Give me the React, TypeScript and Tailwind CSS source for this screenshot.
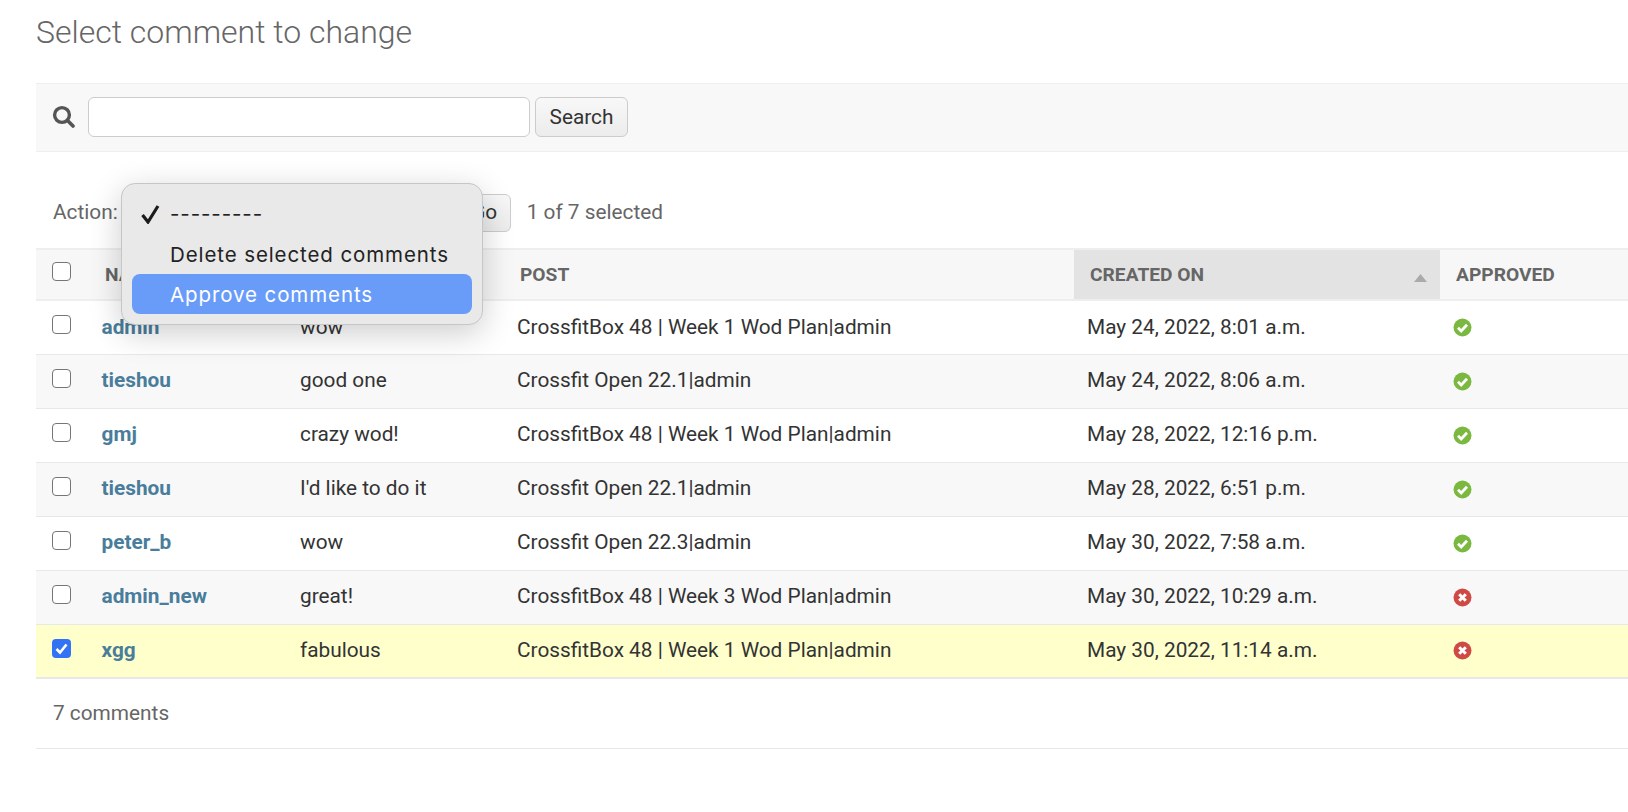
const rows = [
  { n: "admin", c: "wow", p: "CrossfitBox 48 | Week 1 Wod Plan|admin", d: "May 24, 2022, 8:01 a.m.", ok: true },
  { n: "tieshou", c: "good one", p: "Crossfit Open 22.1|admin", d: "May 24, 2022, 8:06 a.m.", ok: true },
  { n: "gmj", c: "crazy wod!", p: "CrossfitBox 48 | Week 1 Wod Plan|admin", d: "May 28, 2022, 12:16 p.m.", ok: true },
  { n: "tieshou", c: "I'd like to do it", p: "Crossfit Open 22.1|admin", d: "May 28, 2022, 6:51 p.m.", ok: true },
  { n: "peter_b", c: "wow", p: "Crossfit Open 22.3|admin", d: "May 30, 2022, 7:58 a.m.", ok: true },
  { n: "admin_new", c: "great!", p: "CrossfitBox 48 | Week 3 Wod Plan|admin", d: "May 30, 2022, 10:29 a.m.", ok: false },
  { n: "xgg", c: "fabulous", p: "CrossfitBox 48 | Week 1 Wod Plan|admin", d: "May 30, 2022, 11:14 a.m.", ok: false, sel: true },
];

function Box({ checked }: { checked?: boolean }) {
  return checked ? (
    <span className="flex h-[19px] w-[19px] items-center justify-center rounded-[4px] bg-[#3273f6]">
      <svg width="15" height="15" viewBox="0 0 15 15" fill="none">
        <path d="M2.5 8 L6 11.5 L12.5 3.5" stroke="#fff" strokeWidth="2.6" />
      </svg>
    </span>
  ) : (
    <span className="block h-[19px] w-[19px] rounded-[4px] border-[1.5px] border-[#767676] bg-white" />
  );
}

function Status({ ok }: { ok: boolean }) {
  return (
    <svg width="19" height="19" viewBox="0 0 19 19" className="block">
      <circle cx="9.5" cy="9.5" r="9" fill={ok ? "#7bb83f" : "#cf4a45"} />
      {ok ? (
        <path d="M5 9.8 L8.2 13 L14 6.8" stroke="#fff" strokeWidth="2.8" fill="none" />
      ) : (
        <path d="M6.2 6.2 L12.8 12.8 M12.8 6.2 L6.2 12.8" stroke="#fff" strokeWidth="3" fill="none" />
      )}
    </svg>
  );
}

export default function App() {
  return (
    <div className="min-h-[812px] overflow-hidden bg-white pl-[36px] font-['Roboto',sans-serif] text-[#333]">
      <h1 className="pt-[13px] text-[32px] leading-[38px] font-light text-[#666]">Select comment to change</h1>

      <div className="mt-[32px] flex h-[69px] items-center border-y border-[#eeeeee] bg-[#f8f8f8] pb-[2px] pl-[17px]">
        <svg width="23" height="23" viewBox="0 0 23 23" fill="none" className="mr-[12px] -translate-x-px">
          <circle cx="10" cy="10" r="7.4" stroke="#555" strokeWidth="3.4" />
          <path d="M15.5 15.5 L21 21" stroke="#555" strokeWidth="3.6" strokeLinecap="round" />
        </svg>
        <div className="h-[40px] w-[442px] rounded-[6px] border border-[#cccccc] bg-white" />
        <div className="ml-[5px] flex h-[40px] w-[93px] items-center justify-center rounded-[6px] border border-[#cccccc] bg-gradient-to-b from-[#f8f8f8] to-[#ececec] pt-[2px] text-[20.8px] text-[#333]">
          Search
        </div>
      </div>

      <div className="relative">
        <div className="flex h-[96px] items-center pt-[26px] pl-[17px] text-[20.8px] text-[#666]">
          <span>Action:</span>
          <span className="ml-[6px] h-[38px] w-[334px] rounded-[6px] border border-[#cccccc] bg-white" />
          <span className="ml-[7px] flex h-[38px] w-[46px] items-center justify-center rounded-[6px] border border-[#cccccc] bg-gradient-to-b from-[#f8f8f8] to-[#ececec] pr-[7px] text-[#333]">
            Go
          </span>
          <span className="ml-[16px]">1 of 7 selected</span>
        </div>

        <div className="absolute left-[85px] top-[31px] z-10 h-[142px] w-[362px] rounded-[14px] border border-[#c6c6c6] bg-[#e8e9e8] px-[10px] pt-[10px] font-['Inter',sans-serif] text-[20.5px] tracking-[0.9px] text-[#222] shadow-[0_8px_32px_rgba(0,0,0,0.2)]">
          <div className="flex h-[40px] items-center pl-[9px]">
            <svg width="20" height="20" viewBox="0 0 20 20" fill="none" className="mr-[9px]">
              <path d="M1.5 11 L7 18 L17 2" stroke="#1c1c1c" strokeWidth="3.2" />
            </svg>
            <span>---------</span>
          </div>
          <div className="flex h-[40px] items-center pl-[38px] pt-[2px]">Delete selected comments</div>
          <div className="flex h-[40px] items-center rounded-[8px] bg-[#699cf8] pl-[38px] pt-[2px] text-white">Approve comments</div>
        </div>

        <table className="w-[1592px] table-fixed border-collapse text-[20.8px]">
          <colgroup>
            <col className="w-[53px]" />
            <col className="w-[198px]" />
            <col className="w-[217px]" />
            <col className="w-[570px]" />
            <col className="w-[366px]" />
            <col />
          </colgroup>
          <thead>
            <tr className="h-[51px] border-y-2 border-[#eeeeee] bg-[#f7f7f7] text-left text-[19.2px] font-bold text-[#666]">
              <th className="pl-[16px] pb-[6px] font-normal"><Box /></th>
              <th className="pl-[16px] pt-[2px] font-bold">NAME</th>
              <th className="pl-[16px] pt-[2px] font-bold">COMMENT</th>
              <th className="pl-[16px] pt-[2px] font-bold">POST</th>
              <th className="bg-[#e3e3e3] pl-[16px] pt-[2px] font-bold">
                <div className="flex items-center justify-between pr-[13px]">
                  <span>CREATED ON</span>
                  <svg width="13" height="8" viewBox="0 0 13 8" className="mt-[6px]"><path d="M6.5 0 L13 8 H0 Z" fill="#aaaaaa" /></svg>
                </div>
              </th>
              <th className="pl-[16px] pt-[2px] font-bold">APPROVED</th>
            </tr>
          </thead>
          <tbody>
            {rows.map((r, i) => (
              <tr
                key={i}
                className={
                  "h-[54px] border-b " +
                  (i === 6 ? "border-b-2 border-[#e8e8e8] bg-[#ffffcc]" : i % 2 === 1 ? "border-[#e8e8e8] bg-[#f8f8f8]" : "border-[#e8e8e8] bg-white")
                }
              >
                <td className="pl-[16px] pb-[5px] align-middle"><Box checked={r.sel} /></td>
                <td className="pl-[12.5px] font-bold text-[#4a7d9b]">{r.n}</td>
                <td className="pl-[13px]">{r.c}</td>
                <td className="pl-[13px]">{r.p}</td>
                <td className="pl-[13px]">{r.d}</td>
                <td className="pl-[13px]"><Status ok={r.ok} /></td>
              </tr>
            ))}
          </tbody>
        </table>

        <div className="flex h-[70px] items-center border-b border-[#e8e8e8] pl-[17px] text-[20.8px] text-[#666]">7 comments</div>
      </div>
    </div>
  );
}
